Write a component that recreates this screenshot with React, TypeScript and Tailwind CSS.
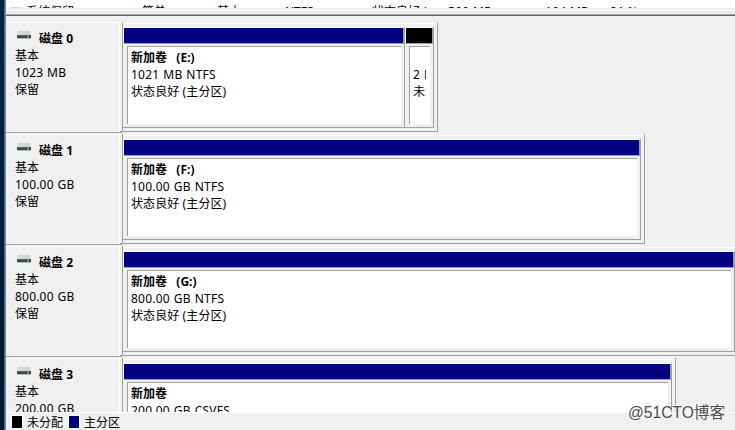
import React from "react";

type Volume = {
  name?: string;
  lines: string[];
  width: string;
  unallocated?: boolean;
};

type Disk = {
  id: number;
  size: string;
  volumes: Volume[];
};

const disks: Disk[] = [
  {
    id: 0,
    size: "1023 MB",
    volumes: [
      { name: "新加卷   (E:)", lines: ["1021 MB NTFS", "状态良好 (主分区)"], width: "w-[282px]" },
      { lines: ["2 MB", "未分配"], width: "w-[29px]", unallocated: true },
    ],
  },
  {
    id: 1,
    size: "100.00 GB",
    volumes: [{ name: "新加卷   (F:)", lines: ["100.00 GB NTFS", "状态良好 (主分区)"], width: "w-[518px]" }],
  },
  {
    id: 2,
    size: "800.00 GB",
    volumes: [{ name: "新加卷   (G:)", lines: ["800.00 GB NTFS", "状态良好 (主分区)"], width: "w-[612px]" }],
  },
  {
    id: 3,
    size: "200.00 GB",
    volumes: [{ name: "新加卷", lines: ["200.00 GB CSVFS", "状态良好 (主分区)"], width: "w-[549px]" }],
  },
];

const columns = [
  { text: "系统保留", width: "w-[116px]" },
  { text: "简单", width: "w-[75px]" },
  { text: "基本", width: "w-[68px]" },
  { text: "NTFS", width: "w-[87px]" },
  { text: "状态良好 (", width: "w-[76px]" },
  { text: "500 MB", width: "w-[97px] tracking-[0.3px]" },
  { text: "104 MB", width: "w-[65px] tracking-[0.3px]" },
  { text: "21 %", width: "w-[60px] tracking-[0.3px]" },
];

function DriveIcon() {
  return (
    <svg width="16" height="10" viewBox="0 0 16 10" className="shrink-0">
      <path d="M3 1h12l1 4H2z" fill="#d0d3d6" />
      <path d="M2 5h14v3H2z" fill="#43484a" />
      <path d="M2 5h14v1H2z" fill="#5b6062" />
      <path d="M2 8h14v1H2z" fill="#b4b7b9" />
      <path d="M12 6h2v1h-2z" fill="#35e850" />
      <path d="M12 7h2v1h-2z" fill="#2a8f38" />
    </svg>
  );
}

function VolumeBox({ volume }: { volume: Volume }) {
  return (
    <div className={`flex h-[101px] shrink-0 flex-col border-b border-[#a0a0a0] ${volume.width}`}>
      <div
        className={`h-[17px] shrink-0 border-t border-r-2 border-b border-l border-t-white border-r-[#a0a0a0] border-b-[#a0a0a0] border-l-white ${
          volume.unallocated ? "bg-black" : "bg-[#000080]"
        }`}
      />
      <div className="flex-1 border-r border-[#a0a0a0] pt-0.5 pr-[3px] pb-[3px] pl-1">
        <div className="h-[78px] border-t border-l border-[#a0a0a0] bg-white pt-0.5 pr-1 pl-[3px]">
          <div className="h-[75px] overflow-hidden">
            <div className="h-[17px] font-bold whitespace-pre">{volume.name}</div>
            {volume.lines.map((line, i) => (
              <div
                key={line}
                className={`h-[17px] whitespace-nowrap ${i === 0 ? "tracking-[0.22px] [word-spacing:0.6px]" : "tracking-[0.1px]"}`}
              >
                {line}
              </div>
            ))}
          </div>
        </div>
      </div>
    </div>
  );
}

function DiskRow({ disk }: { disk: Disk }) {
  return (
    <div className="flex h-[112px] shrink-0">
      <div className="flex h-[111px] w-[116px] shrink-0 border-b border-[#a0a0a0]">
        <div className="h-[110px] w-[114px] shrink-0 border-t border-r border-white pt-[7px] pl-[9px]">
          <div className="flex h-[17px]">
            <DriveIcon />
            <div className="pl-2 font-bold">磁盘 {disk.id}</div>
          </div>
          <div className="h-[17px]">基本</div>
          <div className="h-[17px] whitespace-nowrap tracking-[0.2px] [word-spacing:0.5px]">{disk.size}</div>
          <div className="h-[17px]">保留</div>
        </div>
        <div className="h-[110px] w-0.5 shrink-0 border-b border-[#a0a0a0]" />
      </div>
      <div className="h-[110px] shrink-0 border-r border-b border-l border-[#a0a0a0]">
        <div className="mt-px flex h-[108px] border-t border-white pt-[3px] pr-[3px]">
          {disk.volumes.map((volume, i) => (
            <VolumeBox key={i} volume={volume} />
          ))}
        </div>
      </div>
    </div>
  );
}

export default function App() {
  return (
    <div className="relative flex h-[430px] w-[735px] overflow-hidden bg-[#f0f0f0] font-['Noto_Sans','Noto_Sans_CJK_SC',sans-serif] text-[12px] leading-[17px] text-black">
      <div className="w-1 shrink-0 bg-gradient-to-b from-[#002448] to-[#001a35]" />
      <div className="w-px shrink-0 bg-[#3f6f94]" />
      <div className="w-px shrink-0 bg-[#848484]" />
      <div className="flex min-w-0 flex-1 flex-col">
        <div className="flex h-2 shrink-0 overflow-hidden bg-white pt-[3px] pl-1">
          <div className="mt-1 mr-1 h-3 w-3 shrink-0 bg-[#dcdee0]" />
          {columns.map((column) => (
            <div key={column.text} className={`shrink-0 whitespace-nowrap ${column.width}`}>
              {column.text}
            </div>
          ))}
        </div>
        <div className="h-2 shrink-0 border-b border-[#696969] pt-0.5">
          <div className="h-[5px] border-t border-b border-t-white border-b-[#a0a0a0]">
            <div className="h-px bg-[#e3e3e3]" />
          </div>
        </div>
        <div className="h-[396px] shrink-0 overflow-hidden pt-1.5">
          {disks.map((disk) => (
            <DiskRow key={disk.id} disk={disk} />
          ))}
        </div>
        <div className="flex h-[18px] shrink-0 items-center border-t border-white pt-px pl-[5px]">
          <span className="h-[14px] w-[12px] border border-white bg-black" />
          <span className="pl-1">未分配</span>
          <span className="ml-[5px] h-[14px] w-[12px] border border-white bg-[#000080]" />
          <span className="pl-1">主分区</span>
        </div>
      </div>
      <div className="absolute top-[403px] left-[628px] font-['Liberation_Sans','Noto_Sans_CJK_SC',sans-serif] text-[15.6px] leading-[20px] whitespace-nowrap text-[#4c4c4c] [text-shadow:-1px_-1px_0_#fff]">
        @51CTO博客
      </div>
    </div>
  );
}
